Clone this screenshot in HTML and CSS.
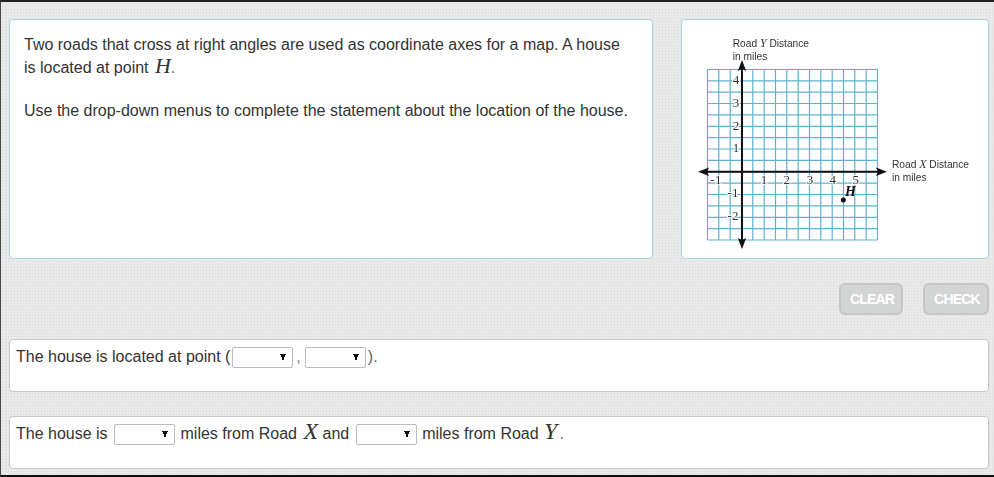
FILE: index.html
```html
<!DOCTYPE html>
<html lang="en">
<head>
    <meta charset="UTF-8">
    <title>Coordinate Map Question</title>
    <link rel="stylesheet" href="styles.css">
</head>
<body>
    <div class="frame">
        <div class="top-row">
            <div class="card prompt">
                <p>Two roads that cross at right angles are used as coordinate axes for a map. A house is located at point <i class="math point">H</i><span class="dot">.</span></p>
                <p>Use the drop-down menus to complete the statement about the location of the house.</p>
            </div>
            <div class="card graph-card">
                <svg class="graph" width="306" height="238" viewBox="0 0 306 238">
                    <g class="grid">
                        <path d="M25.5 49V220M36.8 49V220M48.2 49V220M59.5 49V220M70.8 49V220M82.2 49V220M93.5 49V220M104.8 49V220M116.2 49V220M127.5 49V220M138.8 49V220M150.2 49V220M161.5 49V220M172.8 49V220M184.2 49V220M195.5 49V220"/>
                        <path d="M25.5 49.5H195.5M25.5 60.8H195.5M25.5 72.2H195.5M25.5 83.5H195.5M25.5 94.9H195.5M25.5 106.3H195.5M25.5 117.7H195.5M25.5 129H195.5M25.5 140.4H195.5M25.5 151.8H195.5M25.5 163.2H195.5M25.5 174.5H195.5M25.5 185.9H195.5M25.5 197.3H195.5M25.5 208.6H195.5M25.5 220H195.5"/>
                    </g>
                    <g class="ticks">
                        <text x="34" y="164">-1</text>
                        <text x="82" y="164">1</text>
                        <text x="104.700" y="164">2</text>
                        <text x="128" y="164">3</text>
                        <text x="150.700" y="164">4</text>
                        <text x="173.700" y="164">5</text>
                        <text x="54" y="64">4</text>
                        <text x="54" y="87">3</text>
                        <text x="54" y="110">2</text>
                        <text x="54" y="132">1</text>
                        <text x="51" y="177">-1</text>
                        <text x="51" y="200">-2</text>
                    </g>
                    <g class="axes">
                        <path d="M22 151.7H198M60 47V222"/>
                        <path class="head" d="M16 151.7L27 147.5L25 151.7L27 156ZM205 151.7L194 147.5L196 151.7L194 156ZM60 40L55.8 51L60 49L64.2 51ZM60 229L55.8 218L60 220L64.2 218Z"/>
                    </g>
                    <text class="point-label" x="163" y="176">H</text>
                    <circle cx="161.300" cy="180" r="2.500"/>
                    <text class="axis-label" x="50.700" y="27">Road <tspan class="axis-var">Y</tspan> Distance</text>
                    <text class="axis-label" x="50.700" y="40">in miles</text>
                    <text class="axis-label" x="210" y="148">Road <tspan class="axis-var">X</tspan> Distance</text>
                    <text class="axis-label" x="210" y="161">in miles</text>
                </svg>
            </div>
        </div>

        <div class="buttons">
            <button type="button" class="clear">CLEAR</button>
            <button type="button" class="check">CHECK</button>
        </div>

        <div class="card answer first">
            The house is located at point (<select class="after-paren"></select><span class="comma">,</span><select></select><span class="close">).</span>
        </div>
        <div class="card answer second">
            The house is <select class="gap"></select> miles from Road <i class="math big road-x">X</i> and <select class="gap"></select> miles from Road <i class="math big road-y">Y</i><span class="dot">.</span>
        </div>
    </div>
</body>
</html>
```

FILE: styles.css
```css
* {
    margin: 0;
    padding: 0;
    box-sizing: border-box;
}

html, body {
    width: 994px;
    height: 477px;
    overflow: hidden;
}

body {
    font-family: 'Liberation Sans', Arial, sans-serif;
    color: #333;
    background-color: #000;
}

.frame {
    height: 477px;
    padding: 17px 5px 0 8px;
    border-top: 2px solid #222;
    border-left: 1px solid #444;
    border-bottom: 2px solid #111;
    background-color: #e9e9e9;
    background-image: radial-gradient(#d9d9d9 0.7px, transparent 0.8px);
    background-size: 3px 3px;
}

.card {
    background-color: #fff;
    border-radius: 4px;
}

.top-row {
    display: flex;
    gap: 28px;
    height: 240px;
}

.prompt, .graph-card {
    border: 1px solid #a9d5de;
}

.prompt {
    width: 644px;
    padding: 14px 22px 14px 14px;
    font-size: 16px;
    line-height: 22px;
}

.prompt p {
    margin-bottom: 21px;
}

.graph-card {
    width: 308px;
    overflow: hidden;
}

.graph {
    display: block;
    filter: blur(0.3px);
}

.grid path {
    fill: none;
    stroke: #5fb3d0;
    stroke-width: 1.2;
}

.axes path {
    fill: none;
    stroke: #111;
    stroke-width: 2;
}

.axes .head {
    fill: #111;
    stroke: none;
}

.ticks text {
    font-family: 'Liberation Serif', serif;
    font-size: 13px;
    text-anchor: middle;
    fill: #333;
    stroke: #fff;
    stroke-width: 2px;
    paint-order: stroke;
}

.point-label {
    font-family: 'Liberation Serif', serif;
    font-size: 14px;
    font-weight: bold;
    font-style: italic;
    fill: #111;
}

.axis-label {
    font-size: 10.200px;
    fill: #333;
}

.axis-var {
    font-family: 'Liberation Serif', serif;
    font-style: italic;
    font-size: 12px;
}

circle {
    fill: #111;
}

.math {
    font-family: 'Liberation Serif', serif;
    font-style: italic;
    font-size: 22px;
    line-height: 20px;
}

.point {
    margin-left: 2px;
}

.dot {
    color: #666;
}

.buttons {
    display: flex;
    justify-content: flex-end;
    gap: 20px;
    height: 33px;
    margin-top: 24px;
}

button {
    height: 32px;
    padding-left: 2px;
    border: 2px solid #c4c6c6;
    border-radius: 6px;
    background-color: #d3d5d5;
    color: #fff;
    font-family: 'Liberation Sans', Arial, sans-serif;
    font-size: 14px;
    font-weight: bold;
    letter-spacing: -0.8px;
}

.clear {
    width: 64px;
}

.check {
    width: 66px;
}

.answer {
    height: 53px;
    padding: 5px 6px;
    border: 1px solid #c6c6c6;
    font-size: 16px;
    line-height: 24px;
}

.first {
    margin-top: 23px;
}

.second {
    margin-top: 24px;
    padding-top: 4px;
}

select {
    appearance: none;
    width: 61px;
    height: 21px;
    border: 1px solid #bbb;
    border-radius: 2px;
    background: #fff conic-gradient(from 337deg at 50% 100%, #111 46deg, transparent 0) no-repeat right 6px center / 6px 7px;
    vertical-align: 0;
}

.after-paren {
    margin-left: 2px;
}

.comma {
    margin: 0 4px 0 3px;
    color: #888;
}

.close {
    margin-left: 2px;
    color: #666;
}

.gap {
    margin: 0 1px 0 2px;
}

.big {
    font-size: 24px;
}

.road-x {
    margin-left: 2px;
}

.road-y {
    margin-left: 1px;
    margin-right: 2px;
}
```
